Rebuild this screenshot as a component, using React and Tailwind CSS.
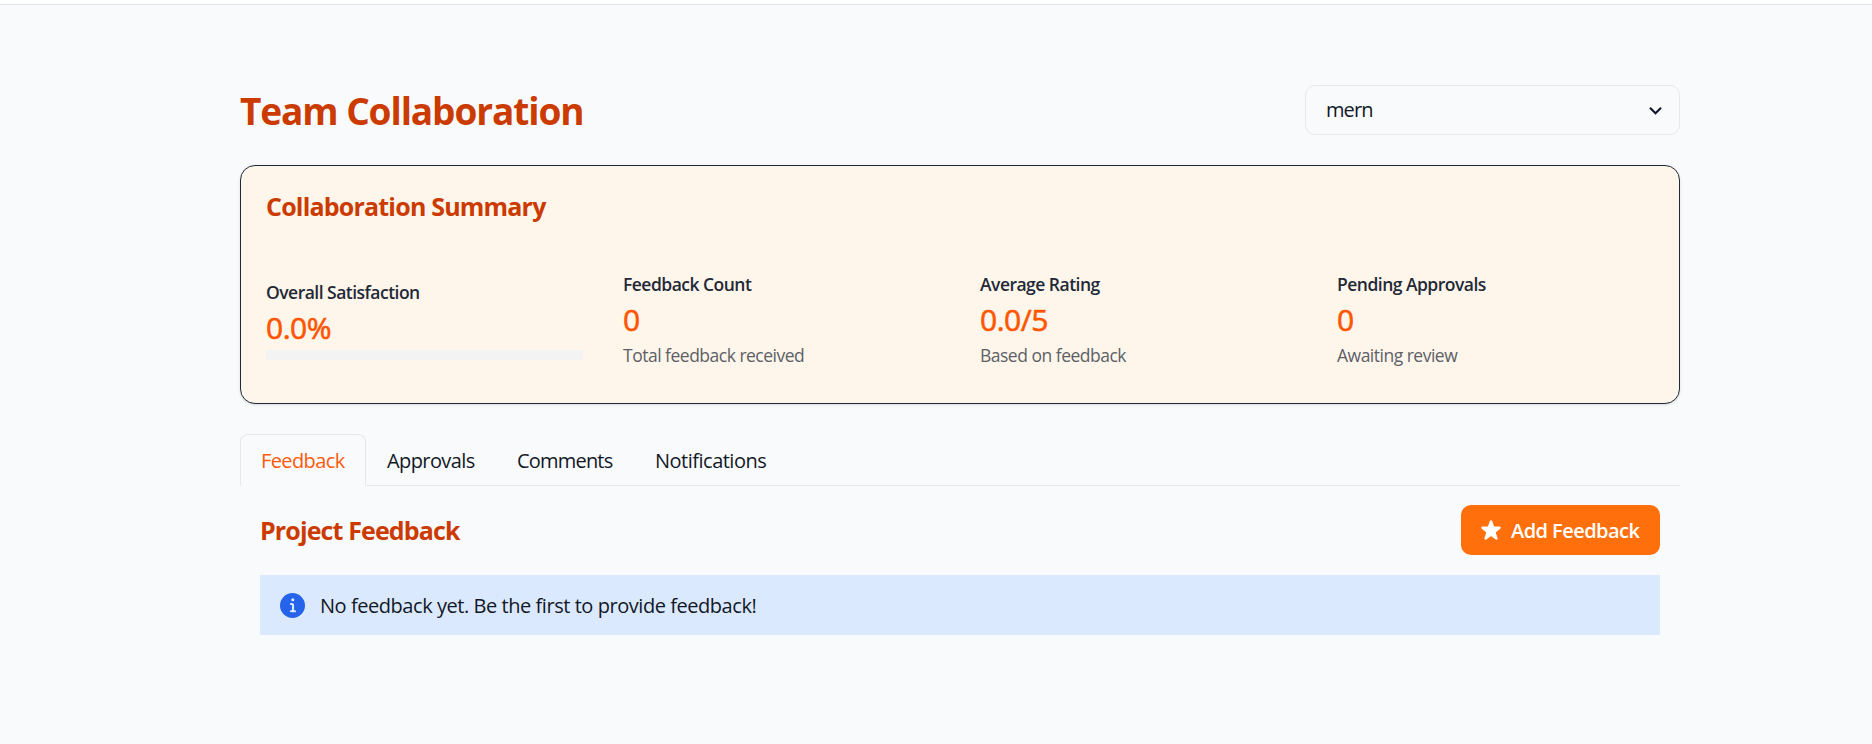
const stats = [
  { label: "Overall Satisfaction", value: "0.0%", bar: true },
  { label: "Feedback Count", value: "0", help: "Total feedback received" },
  { label: "Average Rating", value: "0.0/5", help: "Based on feedback" },
  { label: "Pending Approvals", value: "0", help: "Awaiting review" },
];

function ChevronDown() {
  return (
    <svg viewBox="0 0 24 24" className="size-[25px] fill-[#0f172a]">
      <path d="M16.59 8.59L12 13.17 7.41 8.59 6 10l6 6 6-6z" />
    </svg>
  );
}

function StarIcon() {
  return (
    <svg viewBox="0 0 24 24" className="size-5 fill-white">
      <path d="M23.555,8.729a1.505,1.505,0,0,0-1.406-.98H16.062a.5.5,0,0,1-.472-.334L13.405,1.222a1.5,1.5,0,0,0-2.81,0l-.005.016L8.41,7.415a.5.5,0,0,1-.471.334H1.85A1.5,1.5,0,0,0,.887,10.4l5.184,4.3a.5.5,0,0,1,.155.543L4.048,21.774a1.5,1.5,0,0,0,2.31,1.684l5.346-3.92a.5.5,0,0,1,.591,0l5.344,3.919a1.5,1.5,0,0,0,2.312-1.683l-2.178-6.535a.5.5,0,0,1,.155-.543l5.194-4.306A1.5,1.5,0,0,0,23.555,8.729Z" />
    </svg>
  );
}

function InfoIcon() {
  return (
    <svg viewBox="0 0 24 24" className="size-[25px] fill-[#2563eb]">
      <path d="M12,0A12,12,0,1,0,24,12,12.013,12.013,0,0,0,12,0Zm.25,5a1.5,1.5,0,1,1-1.5,1.5A1.5,1.5,0,0,1,12.25,5ZM14.5,18.5h-4a1,1,0,0,1,0-2h.75a.25.25,0,0,0,.25-.25v-4.5a.25.25,0,0,0-.25-.25H10.5a1,1,0,0,1,0-2h1a2,2,0,0,1,2,2v4.75a.25.25,0,0,0,.25.25h.75a1,1,0,1,1,0,2Z" />
    </svg>
  );
}

function Stat({ label, value, help, bar }) {
  return (
    <div className="flex flex-col">
      <div className="h-[26px] text-[17.5px] leading-[26px] font-semibold tracking-[-0.52px] text-[#1f2937]">{label}</div>
      <div className="h-[45px] text-[30px] leading-[46px] font-medium tracking-[-0.5px] text-[#ff5500] [-webkit-text-stroke:0.6px_#ff5500]">{value}</div>
      {bar ? (
        <div className="h-2.5 bg-[#f3f3f4]" />
      ) : (
        <div className="h-[26px] text-[17.5px] leading-[26px] tracking-[-0.5px] text-[#5c5f66]">{help}</div>
      )}
    </div>
  );
}

export default function App() {
  return (
    <div className="h-[744px] w-full overflow-hidden bg-[#f9fafc] font-['Open_Sans','Noto_Sans',sans-serif] text-xl text-[#111827]">
      <header className="h-[5px] border-b border-[#e2e3e8] bg-white" />
      <main className="ml-60 flex w-[1440px] flex-col pt-20">
        <div className="flex h-[50px] items-center justify-between">
          <h1 className="pt-0.5 text-[37px] leading-[50px] font-bold tracking-[-1.09px] text-[#cb3b00]">Team Collaboration</h1>
          <button className="flex h-[50px] w-[375px] items-center justify-between rounded-[10px] border border-[#e5e7eb] pr-[11px] pl-5">
            <span className="tracking-[-0.9px]">mern</span>
            <ChevronDown />
          </button>
        </div>

        <section className="mt-[30px] h-[239px] rounded-[15px] border border-[#1f2937] bg-[#fff6eb] px-[25px] pt-6 shadow-sm">
          <h2 className="h-[33px] text-[25px] leading-[33px] font-bold tracking-[-0.8px] text-[#cb3b00]">Collaboration Summary</h2>
          <div className="mt-[47px] grid h-[98px] grid-cols-4 items-center gap-x-10">
            {stats.map((s) => (
              <Stat key={s.label} {...s} />
            ))}
          </div>
        </section>

        <nav className="mt-[30px] flex h-[52px] border-b border-[#e5e7eb]">
          <button className="-mb-px h-[52px] w-[126px] rounded-t-[8px] border border-[#e5e7eb] border-b-[#f9fafc] pt-0.5 pl-5 text-left tracking-[-0.6px] text-[#ff5a0a]">Feedback</button>
          <button className="w-[130px] pt-0.5 pl-[21px] text-left tracking-[-0.6px]">Approvals</button>
          <button className="w-[138px] pt-0.5 pl-[21px] text-left tracking-[-0.8px]">Comments</button>
          <button className="w-[152px] pt-0.5 pl-[21px] text-left tracking-[-0.5px]">Notifications</button>
        </nav>

        <section className="flex flex-col gap-5 px-5 pt-[19px]">
          <div className="flex h-[50px] items-center justify-between">
            <h2 className="text-[25px] leading-[33px] font-bold tracking-[-0.87px] text-[#cb3b00]">Project Feedback</h2>
            <button className="flex h-[50px] w-[199px] items-center gap-2.5 rounded-[10px] bg-[#ff700d] pl-5 font-semibold tracking-[-0.55px] whitespace-nowrap text-white">
              <StarIcon />
              <span className="pt-0.5">Add Feedback</span>
            </button>
          </div>
          <div className="flex h-[60px] items-center gap-[15px] bg-[#dbe9fe] px-5">
            <InfoIcon />
            <span className="pt-0.5 tracking-[-0.45px]">No feedback yet. Be the first to provide feedback!</span>
          </div>
        </section>
      </main>
    </div>
  );
}
